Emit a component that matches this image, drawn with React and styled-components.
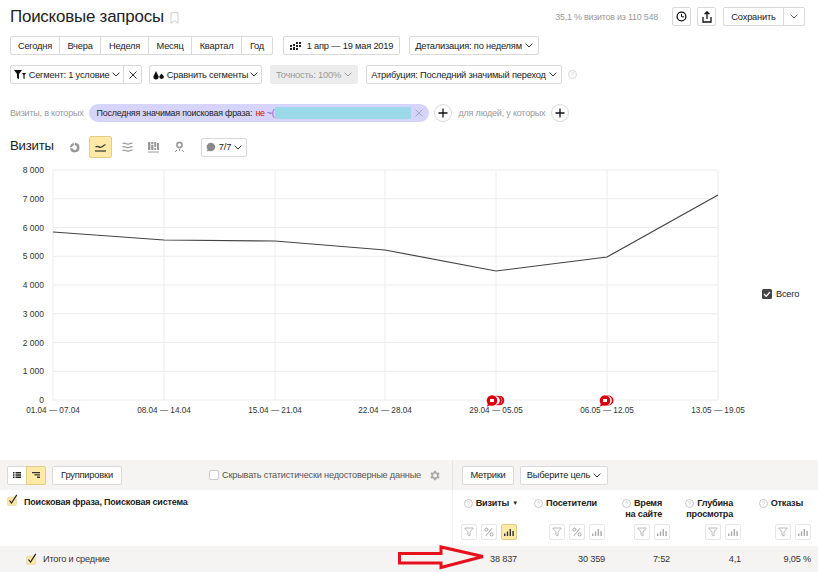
import React from 'react';
import styled, { createGlobalStyle } from 'styled-components';

const Global = createGlobalStyle`
  html, body { margin: 0; padding: 0; background: #fff; }
  body { font-family: "Liberation Sans", Arial, sans-serif; color: #222; }
`;

const Page = styled.div`
  position: relative;
  width: 818px;
  height: 572px;
  overflow: hidden;
  background: #fff;
  font-size: 9.3px;
  letter-spacing: -0.2px;
`;

const Header = styled.header`
  display: flex;
  align-items: center;
  height: 33px;
  padding: 0 13px 0 10px;
`;
const Title = styled.h1`
  margin: 0;
  font-size: 16.9px;
  font-weight: 400;
  color: #222;
  line-height: 20px;
`;
const BookmarkIcon = styled.svg`
  width: 9px;
  height: 12px;
  margin: 2px 0 0 6px;
`;
const Spacer = styled.div`
  flex: 1;
`;
const Stat = styled.span`
  font-size: 8.9px;
  color: #999;
  margin-right: 14px;
`;

const Btn = styled.div`
  box-sizing: border-box;
  display: inline-flex;
  align-items: center;
  justify-content: center;
  gap: ${p => p.$gap ?? 3}px;
  height: 19px;
  width: ${p => (p.$w ? p.$w + 'px' : 'auto')};
  margin-left: ${p => p.$ml ?? 0}px;
  border: 1px solid #d9d9d9;
  border-radius: 2px;
  background: ${p => (p.$disabled ? '#ececec' : '#fff')};
  border-color: ${p => (p.$disabled ? '#ececec' : '#d9d9d9')};
  color: ${p => (p.$disabled ? '#999' : '#222')};
  white-space: nowrap;
  font-size: 9.3px;
`;
const Joined = styled(Btn)`
  border-radius: ${p => p.$r || 0};
  margin-left: ${p => (p.$first ? 0 : -1)}px;
`;

const Row = styled.div`
  display: flex;
  align-items: center;
  height: 19px;
  padding-left: 10px;
  margin-top: ${p => p.$mt ?? 0}px;
`;
const Hint = styled.span`
  color: #999;
  font-size: 9px;
  margin-left: ${p => p.$ml ?? 0}px;
`;
const Pill = styled.div`
  box-sizing: border-box;
  display: flex;
  align-items: center;
  width: 340px;
  height: 18px;
  margin-left: 5px;
  padding: 0 6px 0 8px;
  border-radius: 9px;
  background: #d6d4fb;
  font-size: 8.9px;
  white-space: nowrap;
  overflow: hidden;
`;
const Red = styled.span`
  color: #e00;
  margin-left: 3px;
`;
const Blue = styled.span`
  color: #6a63c9;
  margin-left: 2px;
`;
const Redaction = styled.div`
  width: 136px;
  height: 12px;
  background: #9bd9e8;
  flex: none;
`;
const PillClose = styled.svg`
  width: 8px;
  height: 8px;
  margin-left: auto;
  flex: none;
`;
const RoundPlus = styled.div`
  box-sizing: border-box;
  display: flex;
  align-items: center;
  justify-content: center;
  width: 18px;
  height: 18px;
  margin-left: ${p => p.$ml}px;
  border: 1px solid #d9d9d9;
  border-radius: 50%;
  background: #fff;
`;

const ChartHead = styled.div`
  display: flex;
  align-items: center;
  height: 22px;
  margin-top: 14px;
  padding-left: 10px;
`;
const ChartTitle = styled.span`
  font-size: 13.2px;
  width: 42px;
  color: #222;
  margin-top: -3px;
  margin-right: 9px;
`;
const ViewIcon = styled.div`
  box-sizing: border-box;
  display: flex;
  align-items: center;
  justify-content: center;
  width: ${p => (p.$active ? 23 : 26)}px;
  height: 22px;
  margin: 0 ${p => (p.$active ? 2 : 0)}px;
  border-radius: 2px;
  background: ${p => (p.$active ? '#ffe9a6' : 'transparent')};
  border: ${p => (p.$active ? '1px solid #e3cd85' : 'none')};
`;

const ChartRow = styled.div`
  display: flex;
  align-items: flex-start;
  height: 300px;
  padding-top: 2px;
`;
const ChartSvg = styled.svg`
  display: block;
  width: 760px;
  height: 265px;
  flex: none;
  letter-spacing: 0;
`;
const Legend = styled.div`
  display: flex;
  align-items: center;
  gap: 4px;
  margin: 129px 0 0 2px;
  font-size: 9.2px;
  color: #222;
`;
const LegendBox = styled.svg`
  width: 10px;
  height: 10px;
`;

const Toolbar = styled.div`
  display: grid;
  grid-template-columns: 453px 1fr;
  height: 30px;
  background: #f5f4f2;
`;
const ToolLeft = styled.div`
  display: flex;
  align-items: center;
  padding: 0 11px 0 7px;
  border-right: 1px solid #e6e5e2;
  box-sizing: border-box;
`;
const ToolRight = styled.div`
  display: flex;
  align-items: center;
  padding-left: 9px;
`;
const HideLabel = styled.span`
  display: flex;
  align-items: center;
  gap: 3px;
  margin-left: auto;
  font-size: 9.2px;
  color: #555;
`;
const EmptyCheck = styled.span`
  display: block;
  box-sizing: border-box;
  width: 10px;
  height: 10px;
  background: #fff;
  border: 1px solid #ccc;
  border-radius: 2px;
`;

const HeadGrid = styled.div`
  display: grid;
  grid-template-columns: 453px 66px 88px 65px 71px 70px;
  height: 56px;
`;
const DimCell = styled.div`
  display: flex;
  align-items: flex-start;
  gap: 6px;
  padding: 4px 0 0 7px;
  border-right: 1px solid #f0f0f0;
`;
const DimText = styled.span`
  margin-top: 2px;
  font-weight: 700;
  font-size: 9px;
  color: #222;
  line-height: 13px;
`;
const Metric = styled.div`
  display: flex;
  flex-direction: column;
  align-items: flex-end;
  padding: 8px 2px 0 0;
`;
const MetricTitle = styled.div`
  position: relative;
  height: 21px;
  padding-right: 8px;
  font-weight: 700;
  font-size: 9.1px;
  line-height: 11px;
  text-align: right;
  color: #222;
`;
const TitleLine = styled.div`
  display: flex;
  justify-content: flex-end;
  align-items: center;
  white-space: nowrap;
`;
const QIcon = styled.svg`
  width: 9px;
  height: 9px;
  margin-right: 3px;
  flex: none;
`;
const HelpIcon = styled(QIcon)`
  margin: 0 0 0 6px;
`;
const Tools = styled.div`
  display: flex;
  gap: 4px;
  margin-top: 5px;
`;
const ToolBtn = styled.div`
  box-sizing: border-box;
  display: flex;
  align-items: center;
  justify-content: center;
  width: 16px;
  height: 16px;
  border: 1px solid ${p => (p.$active ? '#e3cd85' : '#e6e6e6')};
  border-radius: 2px;
  background: ${p => (p.$active ? '#ffe9a6' : '#fff')};
`;
const Sort = styled.span`
  position: absolute;
  right: -1px;
  top: 0;
  font-size: 6px;
`;

const TotalGrid = styled.div`
  display: grid;
  grid-template-columns: 453px 66px 88px 65px 71px 70px;
  height: 26px;
  background: #f5f4f2;
  align-items: center;
  font-size: 9.2px;
  color: #333;
`;
const TotalName = styled.div`
  display: flex;
  align-items: center;
  gap: 6px;
  padding-left: 26px;
`;
const TotalVal = styled.div`
  text-align: right;
  padding-right: 2px;
`;
const Arrow = styled.svg`
  position: absolute;
  left: 396px;
  top: 544px;
  width: 94px;
  height: 28px;
`;
const ActiveJoined = styled(Joined)`
  background: #ffe9a6;
  border-color: #e3cd85;
`;
const SaveBtn = styled(Joined)`
  margin-left: 7px;
`;
const Gear = styled.svg`
  width: 13px;
  height: 13px;
  margin-left: 4px;
`;

const Chevron = ({ c = '#333' }) => (
  <svg width="8" height="5" viewBox="0 0 8 5"><path d="M.6.7 4 4 7.400.7" fill="none" stroke={c} strokeWidth="1" /></svg>
);
const Check = () => (
  <svg width="11" height="12" viewBox="0 0 11 12" style={{ flex: 'none' }}>
    <rect x=".5" y="3" width="9" height="8.500" rx="1.500" fill="#f7e6a6" stroke="#e6d9a6" strokeWidth=".6" />
    <path d="M2.500 6.500 4.500 9 9.800.8" fill="none" stroke="#222" strokeWidth="1.200" />
  </svg>
);
const Q = () => (
  <QIcon viewBox="0 0 9 9">
    <circle cx="4.500" cy="4.500" r="4" fill="none" stroke="#bbb" strokeWidth=".8" />
    <path d="M3.400 3.600c0-1.400 2.200-1.400 2.200 0 0 .8-1.100.8-1.100 1.700M4.500 6.200v.8" fill="none" stroke="#bbb" strokeWidth=".7" />
  </QIcon>
);
const Funnel = () => (
  <svg width="10" height="10" viewBox="0 0 10 10"><path d="M.7 1h8.600L6 5v4L4 8V5z" fill="none" stroke="#aaa" strokeWidth=".8" /></svg>
);
const Percent = () => (
  <svg width="10" height="10" viewBox="0 0 10 10" fill="none" stroke="#999" strokeWidth=".9">
    <circle cx="2.400" cy="2.600" r="1.500" /><circle cx="7.600" cy="7.400" r="1.500" /><path d="M8 1.200 2 8.800" />
  </svg>
);
const Bars = ({ c = '#aaa' }) => (
  <svg width="10" height="8" viewBox="0 0 10 8" fill={c}>
    <rect x="0" y="5.500" width="1.400" height="2.500" /><rect x="2.800" y="3.500" width="1.400" height="4.500" /><rect x="5.600" y="1" width="1.400" height="7" /><rect x="8.400" y="3" width="1.400" height="5" />
  </svg>
);
const Plus = () => (
  <svg width="10" height="10" viewBox="0 0 10 10"><path d="M5 .5v9M.5 5h9" stroke="#111" strokeWidth="1.300" /></svg>
);

const yTicks = [8000, 7000, 6000, 5000, 4000, 3000, 2000, 1000, 0];
const xs = [53, 164, 275, 385, 496, 607, 718];
const labels = ['01.04 — 07.04', '08.04 — 14.04', '15.04 — 21.04', '22.04 — 28.04', '29.04 — 05.05', '06.05 — 12.05', '13.05 — 19.05'];
const ys = [232, 240, 241, 250, 271, 257, 195];
const fmt = n => (n === 0 ? '0' : `${n / 1000} 000`);

const Bubble = ({ x }) => (
  <g>
    <circle cx={x} cy="400.500" r="5.300" fill="#d8000f" />
    <path d={`M${x - 4} 403 l-1 3.500 l4 -1.500z`} fill="#d8000f" />
    <rect x={x - 2} y="399" width="4" height="3" fill="#fff" />
  </g>
);

const Chart = () => (
  <ChartSvg viewBox="0 160 760 265">
    {yTicks.map((t, i) => {
      const y = 170 + i * 28.750;
      return (
        <g key={t}>
          <line x1="53" x2="718" y1={y} y2={y} stroke="#ececec" />
          <text x="44" y={y + 3} textAnchor="end" fontSize="8.500" fill="#333" fontFamily="Liberation Sans">{fmt(t)}</text>
        </g>
      );
    })}
    {xs.map((x, i) => (
      <g key={x}>
        <line x1={x} x2={x} y1="170" y2="400" stroke="#ececec" />
        <text x={x} y="413" textAnchor="middle" fontSize="8.200" fill="#333" fontFamily="Liberation Sans">{labels[i]}</text>
      </g>
    ))}
    <polyline points={xs.map((x, i) => `${x},${ys[i]}`).join(' ')} fill="none" stroke="#444" strokeWidth="1.200" />
    <circle cx="499.500" cy="400.500" r="4.800" fill="#d8000f" />
    <circle cx="498" cy="400.500" r="4.300" fill="#fff" />
    <circle cx="497" cy="400.500" r="4.800" fill="#d8000f" />
    <circle cx="495.500" cy="400.500" r="4.300" fill="#fff" />
    <Bubble x={492} />
    <circle cx="608.500" cy="400.500" r="5" fill="#d8000f" />
    <circle cx="607" cy="400.500" r="4.800" fill="#fff" />
    <Bubble x={605} />
  </ChartSvg>
);

const Metrics = [
  { t: ['Посетители'], pct: true },
  { t: ['Время', 'на сайте'] },
  { t: ['Глубина', 'просмотра'] },
  { t: ['Отказы'] },
];

export default function App() {
  return (
    <Page>
      <Global />
      <Header>
        <Title>Поисковые запросы</Title>
        <BookmarkIcon viewBox="0 0 9 12"><path d="M1 .7h7v10.600L4.500 8.600 1 11.300z" fill="none" stroke="#ccc" /></BookmarkIcon>
        <Spacer />
        <Stat>35,1 % визитов из 110 548</Stat>
        <Btn $w={19}>
          <svg width="11" height="11" viewBox="0 0 11 11"><circle cx="5.500" cy="5.500" r="4.400" fill="none" stroke="#111" strokeWidth="1.300" /><path d="M5.500 3v2.800H8" fill="none" stroke="#111" /></svg>
        </Btn>
        <Btn $w={19} $ml={6}>
          <svg width="10" height="12" viewBox="0 0 10 12"><path d="M5 8V1M2.600 3.200 5 .8l2.400 2.400M1 6v5h8V6" fill="none" stroke="#111" strokeWidth="1.300" /></svg>
        </Btn>
        <SaveBtn $w={61} $first $r="2px 0 0 2px">Сохранить</SaveBtn>
        <Joined $w={22} $r="0 2px 2px 0"><Chevron c="#555" /></Joined>
      </Header>

      <Row $mt={3}>
        <Joined $w={50} $first $r="2px 0 0 2px">Сегодня</Joined>
        <Joined $w={42}>Вчера</Joined>
        <Joined $w={49}>Неделя</Joined>
        <Joined $w={44}>Месяц</Joined>
        <Joined $w={51}>Квартал</Joined>
        <Joined $w={32} $r="0 2px 2px 0">Год</Joined>
        <Btn $w={117} $ml={10} $gap={6}>
          <svg width="11" height="8" viewBox="0 0 11 8" fill="#222"><path d="M0 3h2v2H0zM3 2h2v2H3zM6 0h2v2H6zM9 0h2v2H9zM0 6h2v2H0zM3 5h2v3H3zM6 3h2v2H6zM9 3h2v2H9zM6 6h2v2H6z" /></svg>
          1 апр — 19 мая 2019
        </Btn>
        <Btn $w={130} $ml={9}>Детализация: по неделям <Chevron /></Btn>
      </Row>

      <Row $mt={10}>
        <Joined $w={114} $first $r="2px 0 0 2px">
          <svg width="12" height="10" viewBox="0 0 12 10" fill="#111"><path d="M0 0h8L5 4v5L3 8V4zM8 3h4L10.600 5v4L9.400 8.400V5z" /></svg>
          Сегмент: 1 условие <Chevron />
        </Joined>
        <Joined $w={19} $r="0 2px 2px 0">
          <svg width="8" height="8" viewBox="0 0 8 8"><path d="M.5.5l7 7M7.500.5l-7 7" stroke="#333" /></svg>
        </Joined>
        <Btn $w={113} $ml={7} $gap={2}>
          <svg width="12" height="10" viewBox="0 0 12 10" fill="#111"><path d="M3 1 5.400 6A2.600 2.600 0 1 1 .6 6zM8.500 3.400 11 6.600A2.400 2.400 0 1 1 6.200 6.600z" /></svg>
          Сравнить сегменты <Chevron />
        </Btn>
        <Btn $w={88} $ml={8} $disabled>Точность: 100% <Chevron c="#999" /></Btn>
        <Btn $w={196} $ml={8}>Атрибуция: Последний значимый переход <Chevron /></Btn>
        <HelpIcon viewBox="0 0 9 9">
          <circle cx="4.500" cy="4.500" r="4" fill="none" stroke="#ccc" strokeWidth=".8" />
          <path d="M3.400 3.600c0-1.400 2.200-1.400 2.200 0 0 .8-1.100.8-1.100 1.700" fill="none" stroke="#ccc" strokeWidth=".7" />
        </HelpIcon>
      </Row>

      <Row $mt={19}>
        <Hint>Визиты, в которых</Hint>
        <Pill>
          Последняя значимая поисковая фраза:<Red>не</Red><Blue>~(</Blue>
          <Redaction />
          <PillClose viewBox="0 0 8 8"><path d="M.5.5l7 7M7.500.5l-7 7" stroke="#9a98b8" strokeWidth=".8" /></PillClose>
        </Pill>
        <RoundPlus $ml={5}><Plus /></RoundPlus>
        <Hint $ml={7}>для людей, у которых</Hint>
        <RoundPlus $ml={6}><Plus /></RoundPlus>
      </Row>

      <ChartHead>
        <ChartTitle>Визиты</ChartTitle>
        <ViewIcon>
          <svg width="11" height="11" viewBox="0 0 11 11"><path d="M6 .8a4.800 4.800 0 1 1-5 5.600L3.400 6A2.300 2.300 0 1 0 5.600 3.300zM.9 5.200A4.800 4.800 0 0 1 4.800.9l.2 2.400A2.300 2.300 0 0 0 3.200 5z" fill="#999" /></svg>
        </ViewIcon>
        <ViewIcon $active>
          <svg width="11" height="9" viewBox="0 0 11 9"><path d="M.5 4C3 2.200 4 5 6 4.200S9 2 10.500 1.500" fill="none" stroke="#333" strokeWidth="1.200" /><path d="M0 8h11" stroke="#333" strokeWidth="1.200" /></svg>
        </ViewIcon>
        <ViewIcon>
          <svg width="11" height="10" viewBox="0 0 11 10" fill="none" stroke="#999" strokeWidth="1.100"><path d="M.5 1.500C3 0 5 3 7 2s2-1 3.500-.8M.5 5C3 3.500 5 6.500 7 5.500S9 4.500 10.500 4.700M.5 8.500C3 7 5 10 7 9s2-1 3.500-.8" /></svg>
        </ViewIcon>
        <ViewIcon>
          <svg width="11" height="11" viewBox="0 0 11 11" fill="#999"><path d="M0 0h2.400v8H0zM3.200 3h2.200v5H3.200zM3.200 0h2.200v2.200H3.200zM6.200 0h2v5h-2zM6.200 6h2v2h-2zM9 1h2v7H9zM0 9.500h11v1H0z" /></svg>
        </ViewIcon>
        <ViewIcon>
          <svg width="11" height="12" viewBox="0 0 11 12"><circle cx="5.500" cy="4" r="2.600" fill="none" stroke="#999" strokeWidth="1.600" /><path d="M5.500 8v2M1 11l2-2M10 11 8 9" stroke="#999" /></svg>
        </ViewIcon>
        <Btn $w={46} $ml={9} $gap={3}>
          <svg width="10" height="10" viewBox="0 0 10 10"><path d="M5 .8a4.200 4.200 0 1 1-2 7.900L1 9.600l.5-2.200A4.200 4.200 0 0 1 5 .8z" fill="#888" /></svg>
          7/7 <Chevron />
        </Btn>
      </ChartHead>

      <ChartRow>
        <Chart />
        <Legend>
          <LegendBox viewBox="0 0 10 10"><rect width="10" height="10" rx="1.500" fill="#444" /><path d="M2 5l2.200 2.200L8 3" fill="none" stroke="#fff" strokeWidth="1.300" /></LegendBox>
          Всего
        </Legend>
      </ChartRow>

      <Toolbar>
        <ToolLeft>
          <Joined $w={20} $first $r="2px 0 0 2px">
            <svg width="8" height="6" viewBox="0 0 8 6" fill="#222"><path d="M0 0h1.500v1.400H0zM2.500 0H8v1.400H2.500zM0 2.300h1.500v1.400H0zM2.500 2.300H8v1.400H2.500zM0 4.600h1.500V6H0zM2.500 4.600H8V6H2.500z" /></svg>
          </Joined>
          <ActiveJoined $w={20} $r="0 2px 2px 0">
            <svg width="8" height="6" viewBox="0 0 8 6" fill="#333"><path d="M0 0h8v1.200H0zM2.500 2.300H8v1.200H2.500zM5 4.600h3V6H5z" /></svg>
          </ActiveJoined>
          <Btn $w={70} $ml={6}>Группировки</Btn>
          <HideLabel>
            <EmptyCheck />
            Скрывать статистически недостоверные данные
            <Gear viewBox="0 0 24 24"><path fill="#aaa" fillRule="evenodd" d="M19.400 13a7.500 7.500 0 0 0 0-2l2.100-1.600-2-3.400-2.500 1a7.500 7.500 0 0 0-1.700-1L15 3.300h-4l-.4 2.700a7.500 7.500 0 0 0-1.700 1l-2.500-1-2 3.400L6.600 11a7.500 7.500 0 0 0 0 2l-2.200 1.600 2 3.400 2.500-1a7.500 7.500 0 0 0 1.700 1l.4 2.700h4l.4-2.700a7.500 7.500 0 0 0 1.700-1l2.500 1 2-3.400zM13 15.500a3.500 3.500 0 1 1 0-7 3.500 3.500 0 0 1 0 7z" /></Gear>
          </HideLabel>
        </ToolLeft>
        <ToolRight>
          <Btn $w={52}>Метрики</Btn>
          <Btn $w={88} $ml={6}>Выберите цель <Chevron /></Btn>
        </ToolRight>
      </Toolbar>

      <HeadGrid>
        <DimCell><Check /><DimText>Поисковая фраза, Поисковая система</DimText></DimCell>
        <Metric>
          <MetricTitle>
            <TitleLine><Q />Визиты</TitleLine>
            <Sort>▼</Sort>
          </MetricTitle>
          <Tools>
            <ToolBtn><Funnel /></ToolBtn>
            <ToolBtn><Percent /></ToolBtn>
            <ToolBtn $active><Bars c="#333" /></ToolBtn>
          </Tools>
        </Metric>
        {Metrics.map(m => (
          <Metric key={m.t[0]}>
            <MetricTitle>
              {m.t.map((l, i) => <TitleLine key={l}>{i === 0 && <Q />}{l}</TitleLine>)}
            </MetricTitle>
            <Tools>
              <ToolBtn><Funnel /></ToolBtn>
              {m.pct && <ToolBtn><Percent /></ToolBtn>}
              <ToolBtn><Bars /></ToolBtn>
            </Tools>
          </Metric>
        ))}
      </HeadGrid>

      <TotalGrid>
        <TotalName><Check />Итого и средние</TotalName>
        <TotalVal>38 837</TotalVal>
        <TotalVal>30 359</TotalVal>
        <TotalVal>7:52</TotalVal>
        <TotalVal>4,1</TotalVal>
        <TotalVal>9,05 %</TotalVal>
      </TotalGrid>

      <Arrow viewBox="396 544 94 28">
        <path d="M399.500 553.500H441V547L483 556.500L441 567.500V563H399.500z" fill="none" stroke="#e8101c" strokeWidth="3" />
      </Arrow>
    </Page>
  );
}
